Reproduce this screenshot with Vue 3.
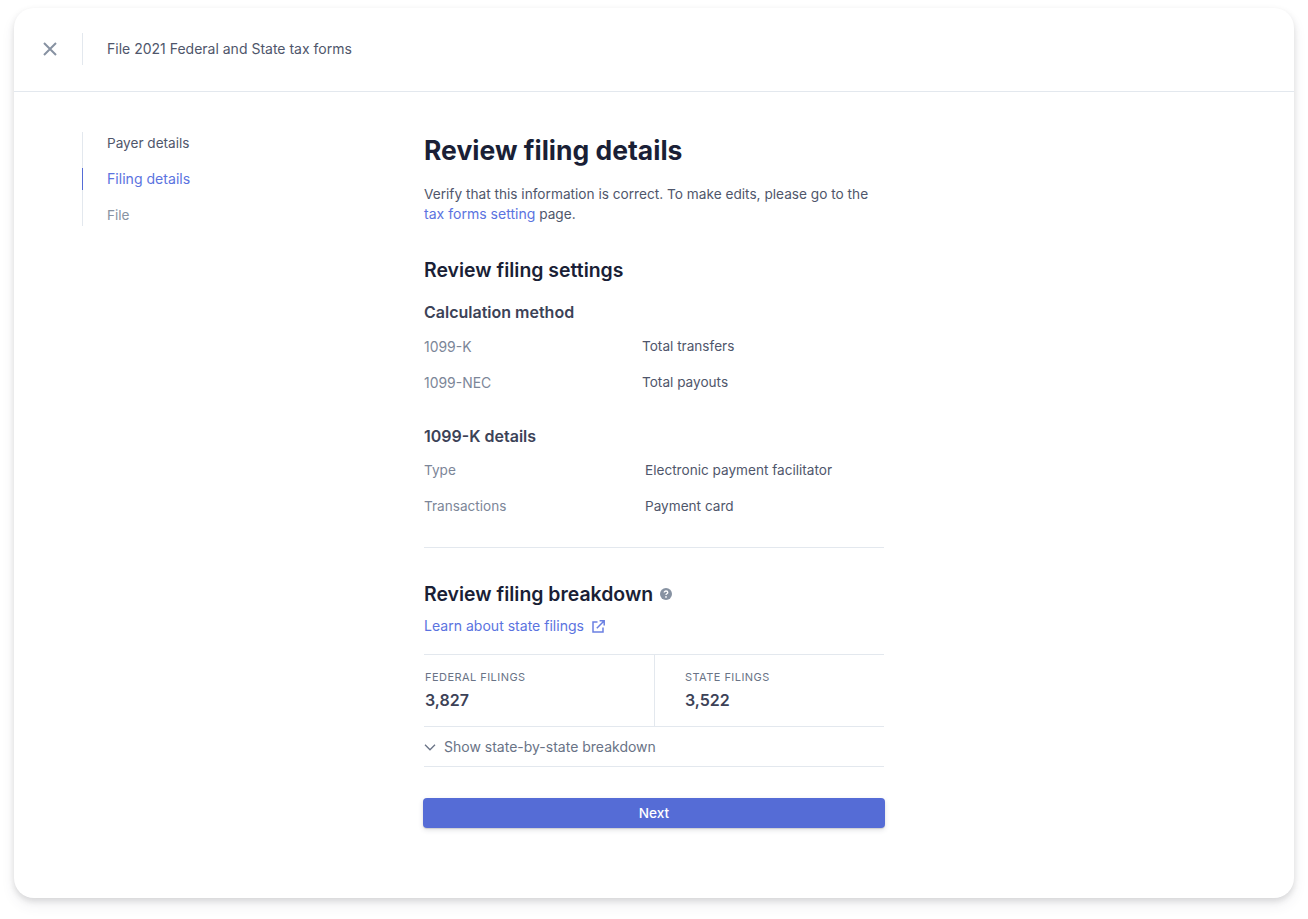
<script setup>
const steps = [
  { label: 'Payer details', state: 'done' },
  { label: 'Filing details', state: 'active' },
  { label: 'File', state: 'todo' }
]

const methods = [
  { label: '1099-K', value: 'Total transfers' },
  { label: '1099-NEC', value: 'Total payouts' }
]

const details = [
  { label: 'Type', value: 'Electronic payment facilitator' },
  { label: 'Transactions', value: 'Payment card' }
]

const filings = [
  { label: 'FEDERAL FILINGS', value: '3,827' },
  { label: 'STATE FILINGS', value: '3,522' }
]
</script>

<template>
  <div class="page">
    <div class="card">
      <header class="header">
        <button class="close" aria-label="Close">
          <svg width="16" height="16" viewBox="0 0 16 16" fill="none">
            <path d="M2 2l12 12M14 2L2 14" stroke="#8792a2" stroke-width="2" />
          </svg>
        </button>
        <div class="header-title">File 2021 Federal and State tax forms</div>
      </header>

      <div class="body">
        <nav class="steps">
          <div v-for="s in steps" :key="s.label" class="step" :class="s.state">{{ s.label }}</div>
        </nav>

        <main class="main">
          <h1>Review filing details</h1>
          <p class="intro">
            Verify that this information is correct. To make edits, please go to the
            <a class="link">tax forms setting</a> page.
          </p>

          <h2>Review filing settings</h2>
          <h3>Calculation method</h3>
          <dl class="rows methods">
            <div v-for="r in methods" :key="r.label" class="row">
              <dt>{{ r.label }}</dt>
              <dd>{{ r.value }}</dd>
            </div>
          </dl>

          <h3 class="details-title">1099-K details</h3>
          <dl class="rows facts">
            <div v-for="r in details" :key="r.label" class="row">
              <dt>{{ r.label }}</dt>
              <dd>{{ r.value }}</dd>
            </div>
          </dl>

          <hr class="divider" />

          <h2 class="breakdown-title">
            Review filing breakdown
            <svg class="help" width="12" height="12" viewBox="0 0 12 12">
              <circle cx="6" cy="6" r="6" fill="#8792a2" />
              <path d="M4.2 4.6c0-1 .8-1.6 1.8-1.6s1.8.6 1.8 1.5c0 1.3-1.8 1.3-1.8 2.4" fill="none" stroke="#fff" stroke-width="1.3" />
              <circle cx="6" cy="8.9" r=".85" fill="#fff" />
            </svg>
          </h2>
          <a class="link learn">
            Learn about state filings
            <svg width="13" height="13" viewBox="0 0 13 13" fill="none" stroke="#6b80e2" stroke-width="1.5">
              <path d="M5.5 2H1v10h10V7.5" />
              <path d="M4.8 8.2L12 1M7.6.8h4.6v4.6" />
            </svg>
          </a>

          <div class="stats">
            <div v-for="f in filings" :key="f.label" class="stat">
              <div class="stat-label">{{ f.label }}</div>
              <div class="stat-value">{{ f.value }}</div>
            </div>
          </div>

          <div class="toggle">
            <svg width="12" height="12" viewBox="0 0 12 12" fill="none">
              <path d="M1 3.8l5 5 5-5" stroke="#697386" stroke-width="1.3" />
            </svg>
            Show state-by-state breakdown
          </div>

          <button class="next">Next</button>
        </main>
      </div>
    </div>
  </div>
</template>

<style>
html, body {
  background: #fff;
}
</style>

<style scoped>
.page {
  padding: 8px 14px 21px;
  font-family: Inter, "Liberation Sans", sans-serif;
  font-size: 13.6px;
  line-height: 20px;
  color: #4f566b;
}
.card {
  height: 890px;
  box-sizing: border-box;
  background: #fff;
  border-radius: 20px;
  box-shadow: 0 7px 14px rgba(60, 66, 87, 0.08), 0 3px 6px rgba(0, 0, 0, 0.12);
}
.header {
  height: 84px;
  box-sizing: border-box;
  border-bottom: 1px solid #e3e8ee;
  display: flex;
  align-items: center;
  padding: 0 0 2px 28px;
}
.close {
  width: 16px;
  height: 16px;
  padding: 0;
  border: 0;
  background: none;
  display: flex;
  margin-right: 24px;
}
.header-title {
  border-left: 1px solid #e3e8ee;
  height: 32px;
  line-height: 32px;
  padding-left: 24px;
  font-size: 14px;
}
.body {
  display: flex;
  padding: 40px 0 0 68px;
}
.steps {
  width: 341px;
  flex: none;
  display: flex;
  flex-direction: column;
  align-self: flex-start;
  gap: 14px;
  border-left: 1px solid #e3e8ee;
}
.step {
  height: 22px;
  line-height: 22px;
  padding-left: 24px;
  margin-left: -1px;
  border-left: 1px solid transparent;
}
.step.active {
  color: #5b73e0;
  border-left-color: #556cd6;
  font-size: 14.1px;
}
.step.todo {
  color: #8792a2;
}
.main {
  width: 460px;
}
h1 {
  margin: 0;
  font-size: 26.5px;
  line-height: 36px;
  font-weight: 700;
  color: #1a1f36;
}
.intro {
  margin: 16px 0 0;
  font-size: 13.66px;
  line-height: 20px;
}
.link {
  color: #5b73e0;
  font-size: 14.05px;
}
h2 {
  margin: 32px 0 0;
  font-size: 19.45px;
  line-height: 28px;
  font-weight: 600;
  color: #1a1f36;
}
h3 {
  margin: 16px 0 0;
  font-size: 16px;
  line-height: 24px;
  font-weight: 600;
  color: #3c4257;
}
.rows {
  margin: 0;
}
.row {
  display: flex;
  height: 36px;
  align-items: center;
}
dt {
  color: #7c8698;
}
dd {
  margin: 0;
}
.methods {
  margin-top: 4px;
}
.methods dt {
  width: 218px;
  padding-top: 1px;
  font-size: 13.95px;
}
.details-title {
  margin-top: 24px;
}
.facts {
  margin-top: 4px;
}
.facts dt {
  width: 221px;
}
.divider {
  margin: 23px 0 0;
  border: 0;
  border-top: 1px solid #e3e8ee;
}
.breakdown-title {
  margin-top: 32px;
  display: flex;
  align-items: center;
  gap: 7px;
}
.learn {
  margin-top: 8px;
  display: flex;
  align-items: center;
  gap: 8px;
}
.stats {
  margin-top: 18px;
  display: grid;
  grid-template-columns: 1fr 1fr;
  height: 73px;
  box-sizing: border-box;
  border-top: 1px solid #e3e8ee;
  border-bottom: 1px solid #e3e8ee;
}
.stat {
  padding: 14px 0 0 1px;
}
.stat + .stat {
  border-left: 1px solid #e3e8ee;
  padding-left: 30px;
}
.stat-label {
  font-size: 11px;
  line-height: 16px;
  letter-spacing: 0.45px;
  color: #697386;
}
.stat-value {
  margin-top: 3px;
  font-size: 16px;
  line-height: 24px;
  font-weight: 600;
  color: #3c4257;
}
.toggle {
  height: 40px;
  box-sizing: border-box;
  border-bottom: 1px solid #e3e8ee;
  display: flex;
  align-items: center;
  gap: 8px;
  color: #697386;
  font-size: 14px;
}
.next {
  display: block;
  margin: 31px 0 0 -1px;
  width: 462px;
  height: 30px;
  border: 0;
  border-radius: 4px;
  background: #556cd6;
  color: #fff;
  font: 500 13.6px/20px Inter, "Liberation Sans", sans-serif;
  box-shadow: 0 2px 5px rgba(60, 66, 87, 0.16), 0 1px 1px rgba(0, 0, 0, 0.12);
}
</style>
